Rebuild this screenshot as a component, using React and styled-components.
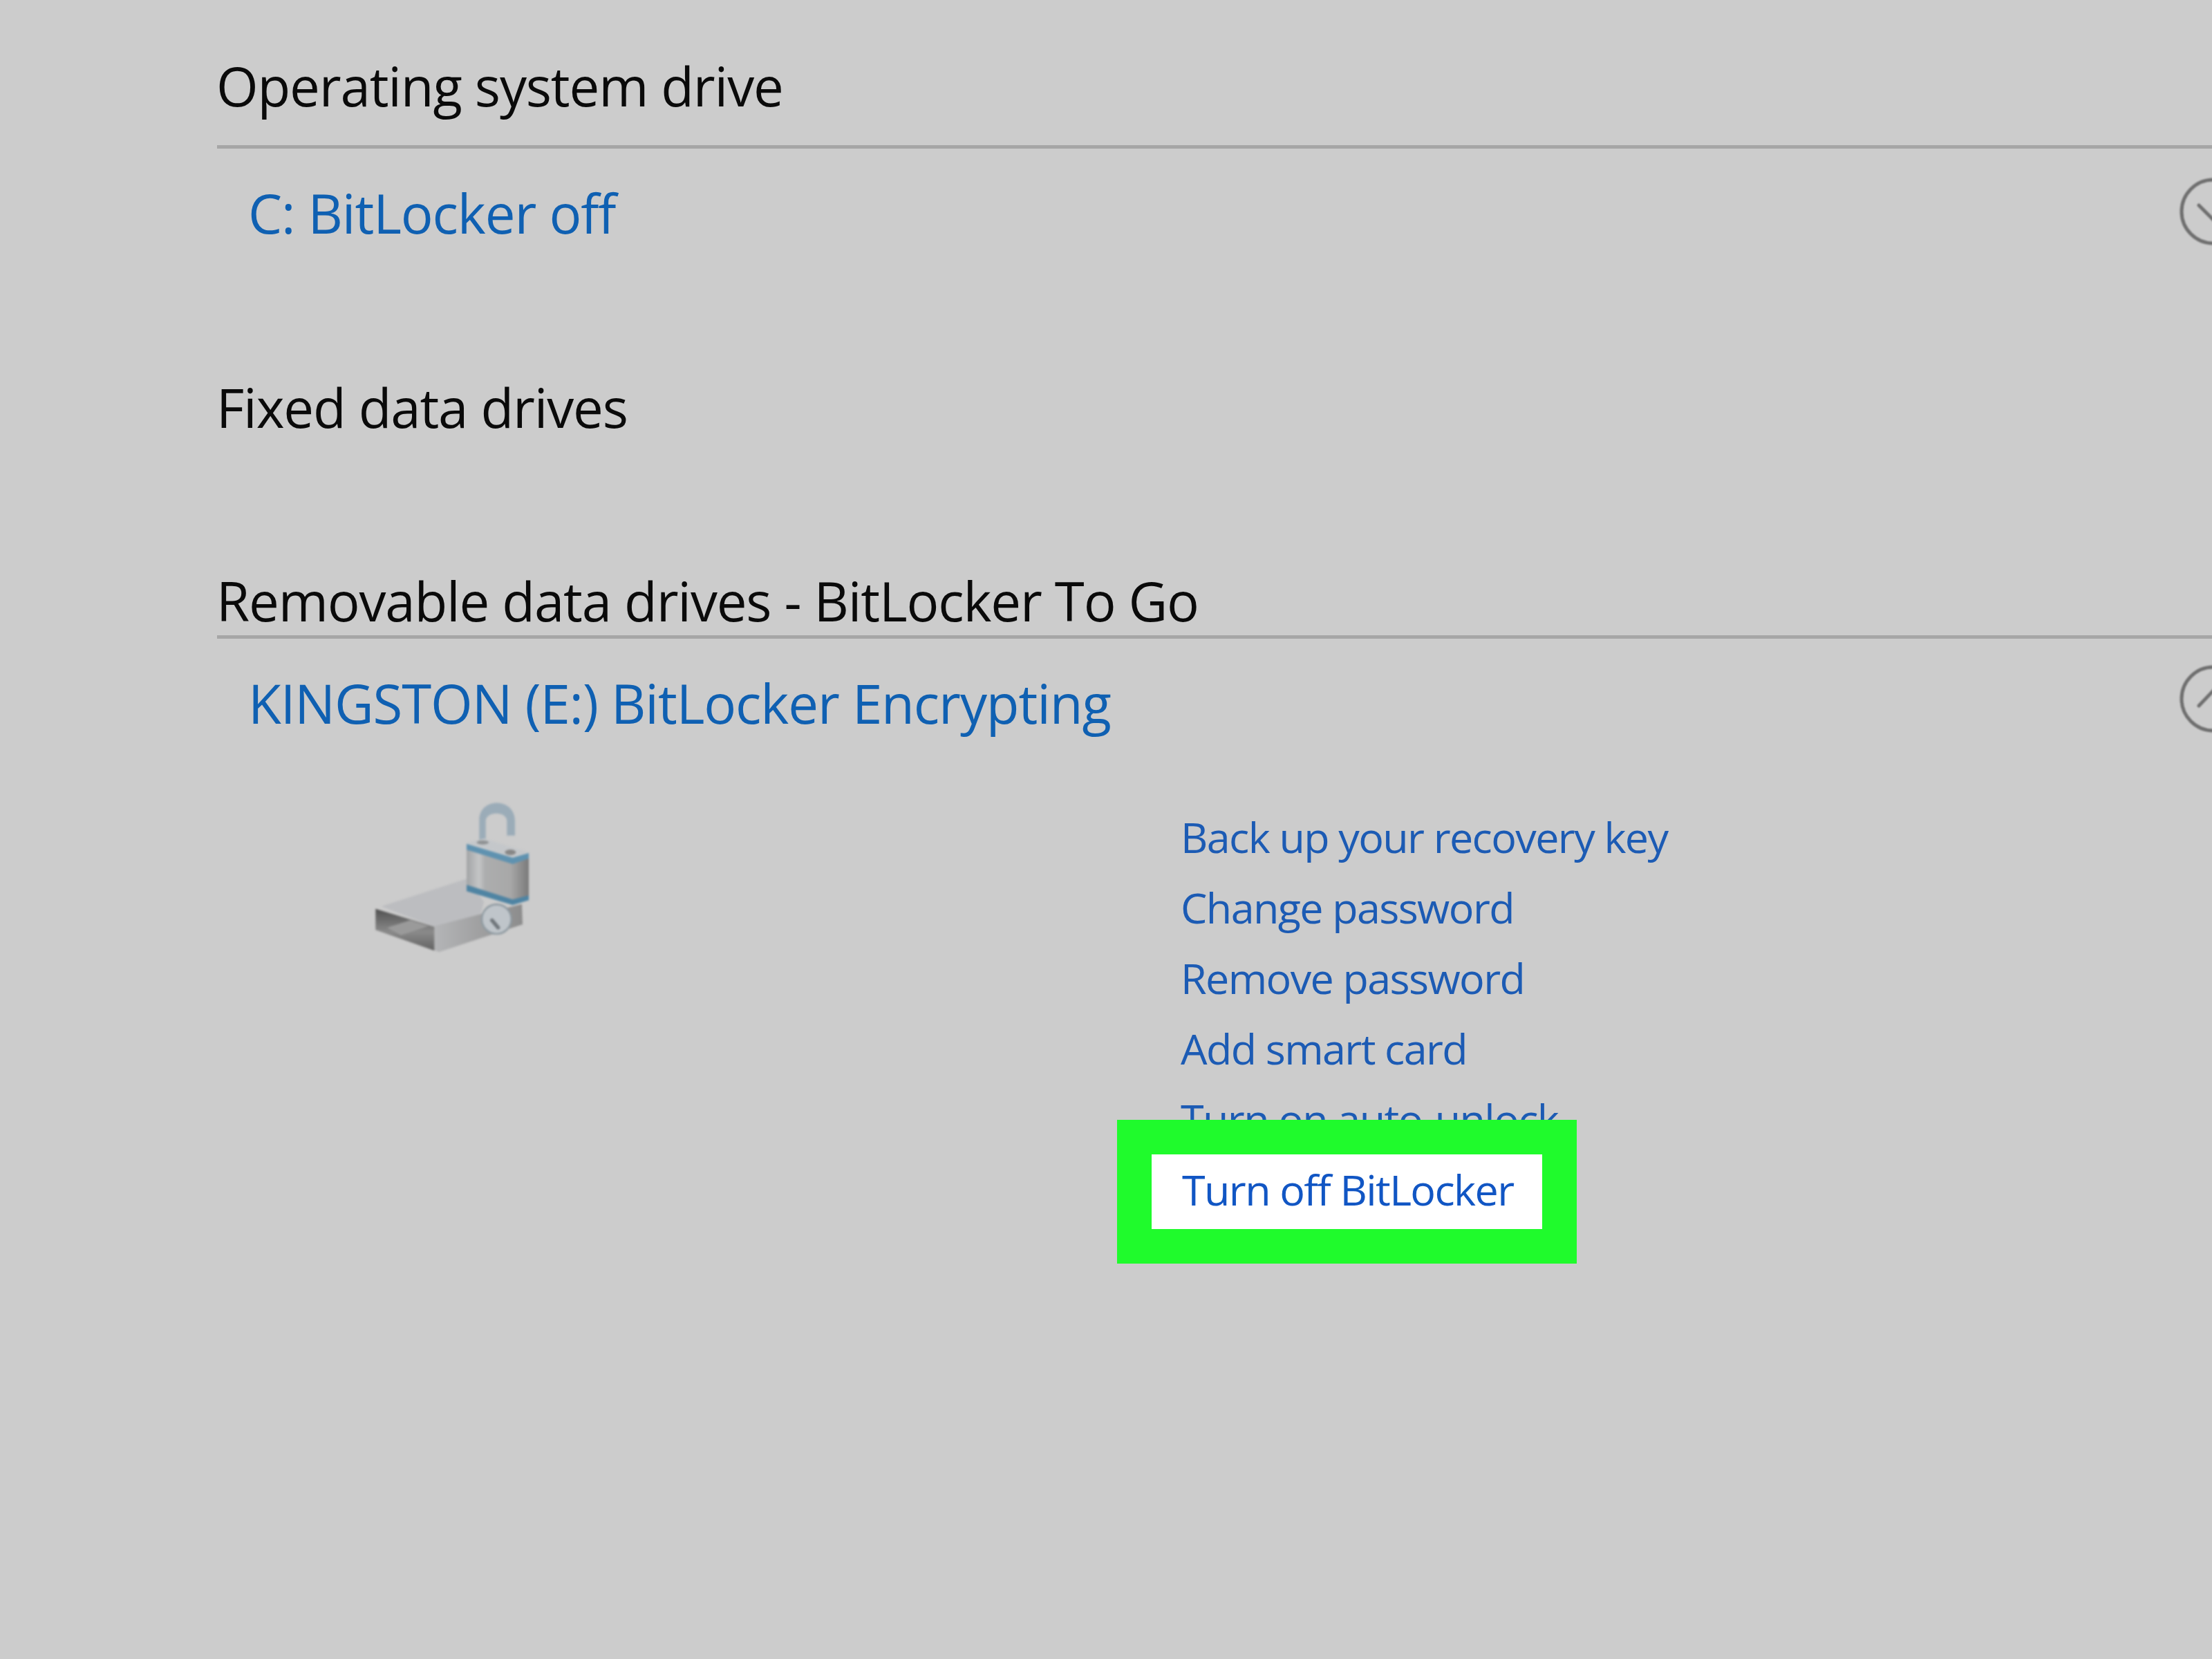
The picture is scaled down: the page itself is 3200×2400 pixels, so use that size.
import React from "react";
import styled, { createGlobalStyle } from "styled-components";

const GlobalStyle = createGlobalStyle`
  html, body {
    margin: 0;
    padding: 0;
    background: #cccccc;
  }
`;

const Page = styled.div`
  width: 3200px;
  height: 2400px;
  overflow: hidden;
  background: #cccccc;
  box-sizing: border-box;
  padding: 74px 0 0 314px;
  font-family: "Open Sans", "Noto Sans", sans-serif;
`;

const Section = styled.section`
  margin-bottom: ${({ $gap }) => $gap || 0}px;
`;

const Heading = styled.div`
  font-size: 78px;
  line-height: 100px;
  letter-spacing: -1.15px;
  margin-left: -1px;
  color: #0a0a0a;
  white-space: nowrap;
  filter: blur(0.6px);
`;

const Divider = styled.div`
  height: 5px;
  background: #a6a6a6;
  margin-top: ${({ $top }) => $top}px;
  filter: blur(0.6px);
`;

const DriveRow = styled.div`
  display: flex;
  justify-content: space-between;
  align-items: center;
  height: 100px;
  margin-top: 41px;
  padding-left: 45px;
  margin-right: -52px;
`;

const DriveName = styled.div`
  font-size: 78px;
  line-height: 100px;
  letter-spacing: -1.1px;
  margin-top: 4px;
  color: #0f60b2;
  white-space: nowrap;
  filter: blur(0.6px);
`;

const ToggleIcon = styled.svg`
  width: 100px;
  height: 100px;
  flex: none;
  margin-bottom: ${({ $lift }) => $lift}px;
  filter: blur(0.8px);
`;

const Details = styled.div`
  display: grid;
  grid-template-columns: 340px 1fr;
  column-gap: 888px;
  padding-left: 166px;
  margin-top: 53px;
`;

const DriveIcon = styled.svg`
  width: 340px;
  height: 300px;
  filter: blur(1.5px);
`;

const Actions = styled.div`
  display: flex;
  flex-direction: column;
  margin-top: 42px;
`;

const Action = styled.div`
  font-size: 61px;
  line-height: 102px;
  letter-spacing: -1.6px;
  color: #1c5bb4;
  white-space: nowrap;
  filter: blur(0.7px);
`;

const HighlightRow = styled.div`
  position: relative;
  height: 102px;
`;

const Highlight = styled.div`
  position: absolute;
  left: -42px;
  top: 0;
  width: 565px;
  height: 108px;
  background: #ffffff;
  outline: 50px solid #1ffb2c;
  padding-left: 44px;
  box-sizing: border-box;
  font-size: 61px;
  line-height: 102px;
  letter-spacing: -1.6px;
  color: #1156c4;
  white-space: nowrap;
`;

const Toggle = ({ up }) => (
  <ToggleIcon viewBox="0 0 100 100" $lift={up ? 8 : 1}>
    <circle cx="50" cy="50" r="46" fill="none" stroke="#6f6f6f" strokeWidth="5" />
    <path
      d={up ? "M29 60 L50 38 L71 60" : "M29 41 L50 62 L71 41"}
      fill="none"
      stroke="#6f6f6f"
      strokeWidth="5"
      strokeLinecap="round"
    />
  </ToggleIcon>
);

const LockedDrive = () => (
  <DriveIcon viewBox="0 0 1020 900">
    <defs>
      <linearGradient id="slot" x1="0" y1="0" x2="0" y2="1">
        <stop offset="0" stopColor="#4f4f4f" />
        <stop offset="0.55" stopColor="#8a8a8a" />
        <stop offset="1" stopColor="#626262" />
      </linearGradient>
      <linearGradient id="side" x1="0" y1="0" x2="1" y2="0">
        <stop offset="0" stopColor="#b4b5b7" />
        <stop offset="1" stopColor="#8c8c8c" />
      </linearGradient>
      <linearGradient id="body" x1="0" y1="0" x2="1" y2="0">
        <stop offset="0" stopColor="#a2a4a6" />
        <stop offset="0.2" stopColor="#c4c5c6" />
        <stop offset="0.3" stopColor="#acadae" />
        <stop offset="0.7" stopColor="#a8a8a8" />
        <stop offset="1" stopColor="#7a7a7a" />
      </linearGradient>
    </defs>
    <path d="M215 580 L590 458 L660 560 L640 640 L445 668 Z" fill="#bcbdc0" />
    <path d="M445 665 L660 610 L825 570 L828 658 L465 778 L445 770 Z" fill="url(#side)" />
    <path d="M190 590 L445 668 L445 772 L190 682 Z" fill="url(#slot)" />
    <path d="M240 672 L340 640 L420 665 L300 705 Z" fill="#9a9a9a" />
    <circle cx="715" cy="635" r="64" fill="#bfc5ca" stroke="#8f9aa1" strokeWidth="8" />
    <path d="M695 640 L722 672" stroke="#70767b" strokeWidth="16" strokeLinecap="round" />
    <path d="M640 300 L640 205 C640 105 795 105 795 210 L795 272 L760 272 L760 210 C760 165 668 165 668 210 L668 305 Z" fill="#9bacb8" />
    <path d="M585 305 L660 285 L855 345 L785 365 Z" fill="#c4c7ca" />
    <ellipse cx="775" cy="345" rx="24" ry="12" fill="#878787" />
    <ellipse cx="655" cy="302" rx="26" ry="9" fill="#8f9294" />
    <path d="M585 320 L785 385 L855 362 L855 545 L785 570 L585 500 Z" fill="url(#body)" />
    <path d="M585 308 L785 368 L855 348 L855 372 L785 396 L585 334 Z" fill="#5f92b0" />
    <path d="M585 486 L785 550 L855 532 L855 553 L785 574 L585 514 Z" fill="#4f84a3" />
  </DriveIcon>
);

const App = () => {
  return (
    <Page>
      <GlobalStyle />
      <Section $gap={183}>
        <Heading>Operating system drive</Heading>
        <Divider $top={36} />
        <DriveRow>
          <DriveName>C: BitLocker off</DriveName>
          <Toggle />
        </DriveRow>
      </Section>
      <Section $gap={180}>
        <Heading>Fixed data drives</Heading>
      </Section>
      <Section>
        <Heading>Removable data drives - BitLocker To Go</Heading>
        <Divider $top={0} />
        <DriveRow>
          <DriveName>KINGSTON (E:) BitLocker Encrypting</DriveName>
          <Toggle up />
        </DriveRow>
        <Details>
          <LockedDrive />
          <Actions>
            <Action>Back up your recovery key</Action>
            <Action>Change password</Action>
            <Action>Remove password</Action>
            <Action>Add smart card</Action>
            <Action>Turn on auto-unlock</Action>
            <HighlightRow>
              <Highlight>Turn off BitLocker</Highlight>
            </HighlightRow>
          </Actions>
        </Details>
      </Section>
    </Page>
  );
};

export default App;
